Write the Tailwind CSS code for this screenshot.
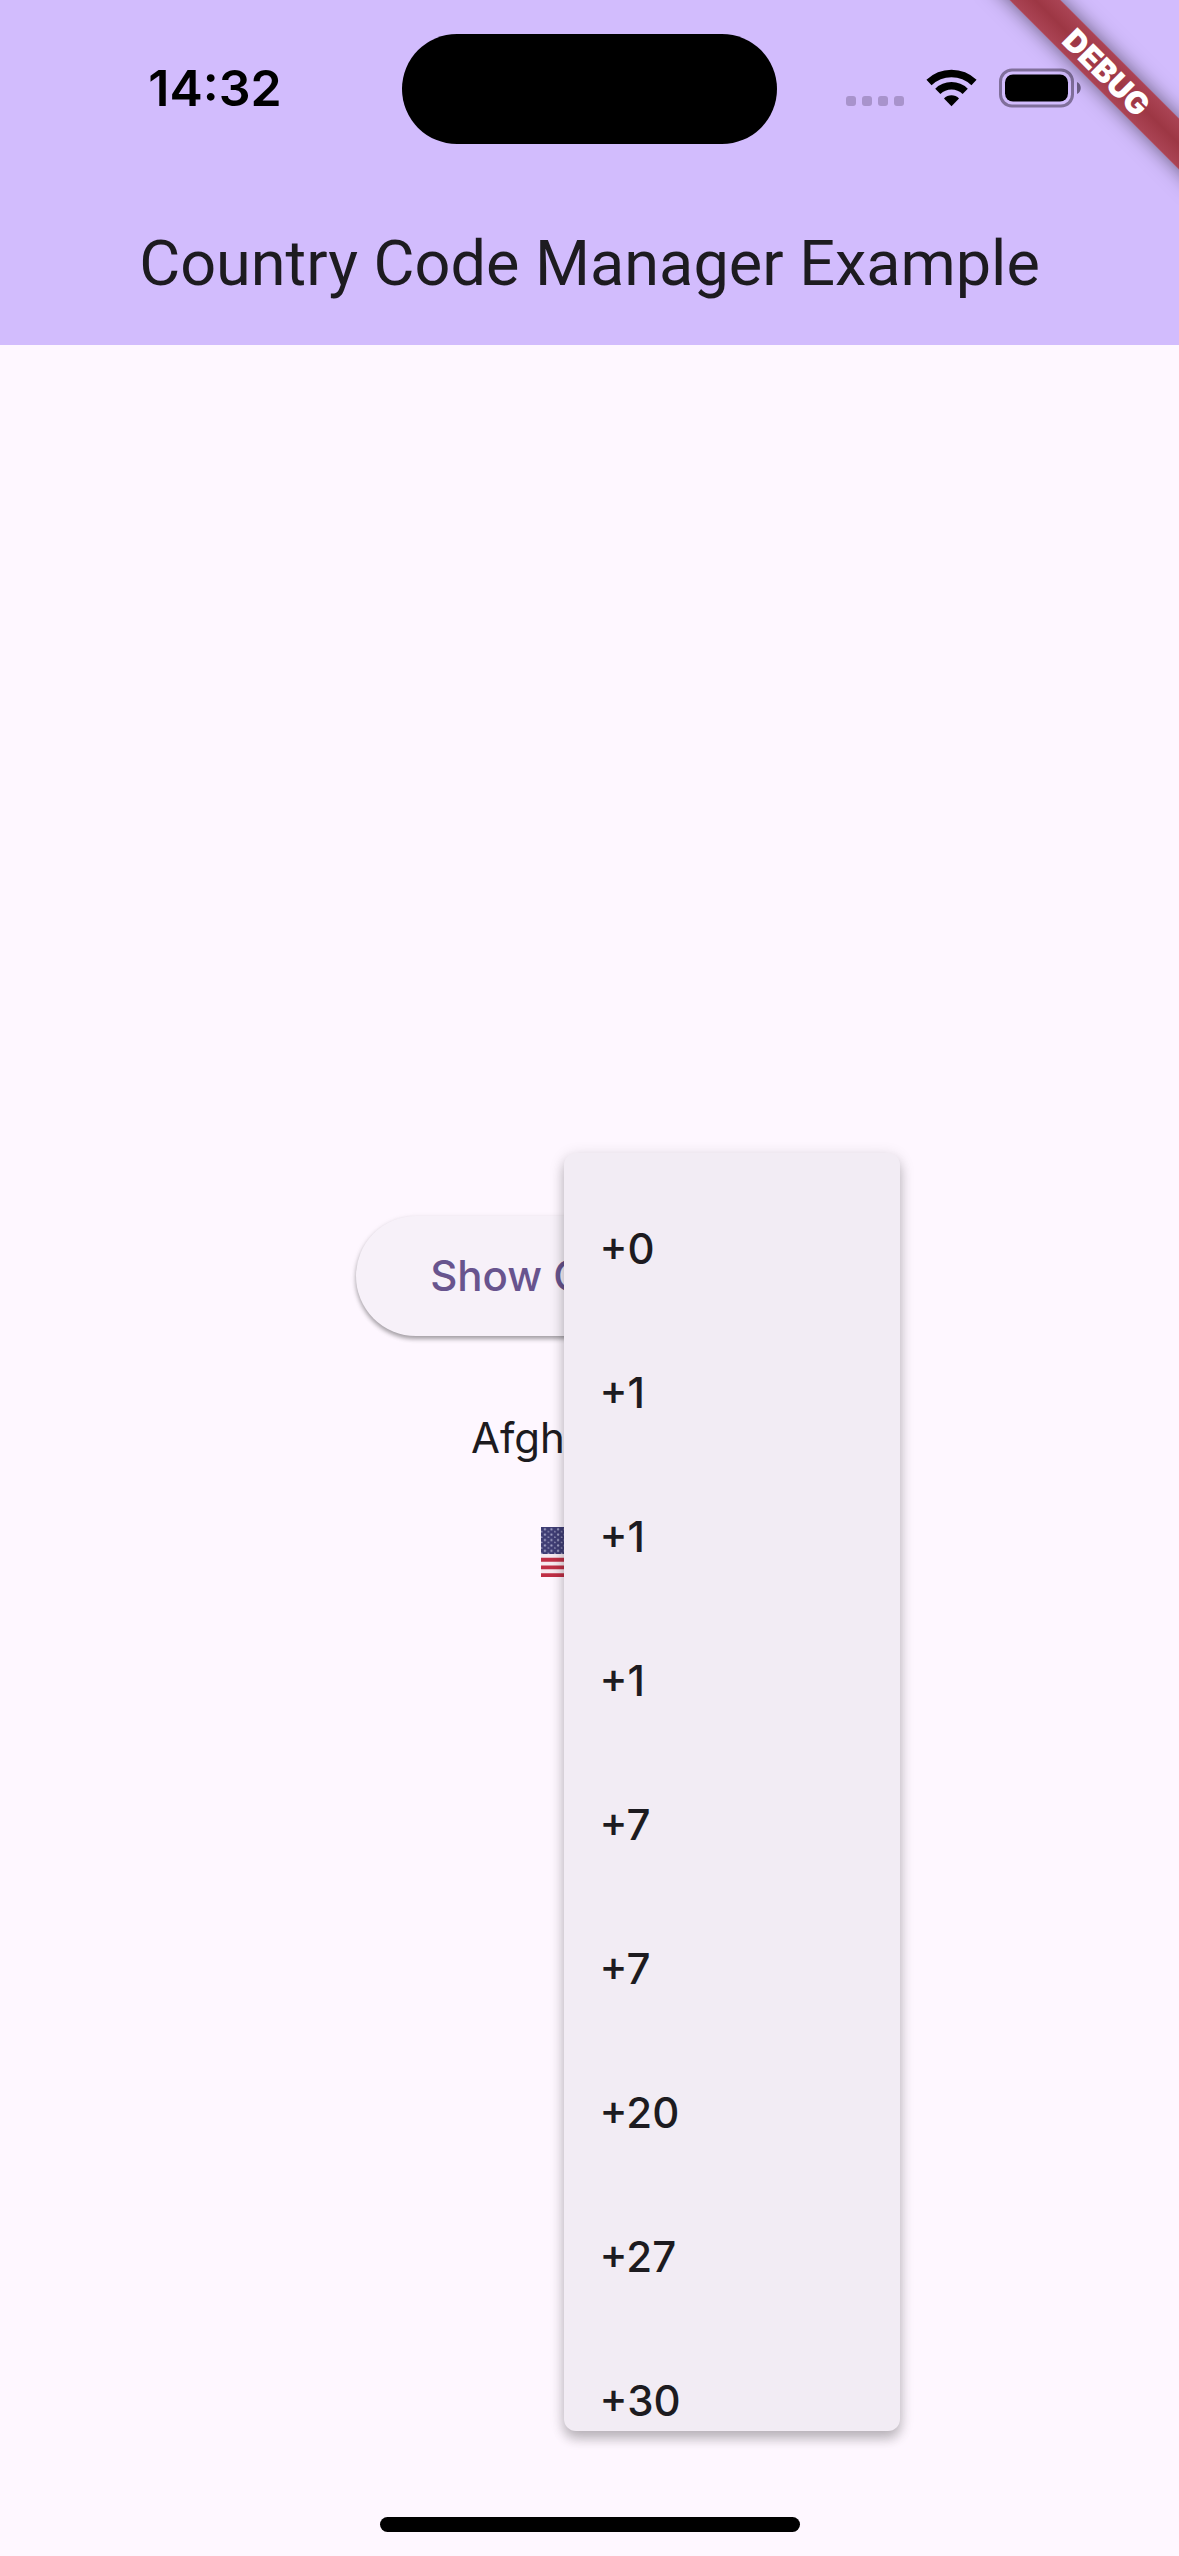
<!DOCTYPE html>
<html lang="en">
<head>
<meta charset="utf-8">
<meta name="viewport" content="width=device-width, initial-scale=1">
<title>Country Code Manager Example</title>
<script src="https://cdn.jsdelivr.net/npm/@tailwindcss/browser@4"></script>
</head>
<body class="relative flex min-h-screen flex-col overflow-x-hidden bg-[#fef7ff] font-['Inter',sans-serif] text-[#1d1b20]">
  <header class="bg-[#d2bcfd]">
    <!-- Status bar -->
    <div class="grid h-[177px] grid-cols-[1fr_375px_1fr] items-center px-7 text-black">
      <time class="pb-0.5 text-center text-[50px] leading-none font-semibold">14:32</time>
      <div class="h-[110px] rounded-full bg-black"></div>
      <div class="flex items-center justify-center pb-0.5">
        <svg class="h-10 w-[236px]" viewBox="0 0 236 40" aria-label="Wi-Fi on, battery full" role="img">
          <g fill="#a893cc">
            <rect x="0" y="28" width="10" height="10" rx="3"/>
            <rect x="16" y="28" width="10" height="10" rx="3"/>
            <rect x="32" y="28" width="10" height="10" rx="3"/>
            <rect x="48" y="28" width="10" height="10" rx="3"/>
          </g>
          <g fill="none" stroke="#000" stroke-width="7.4">
            <path d="M83 14.5a32.500 32.500 0 0 1 45 0"/>
            <path d="M91.800 23.300a19.600 19.600 0 0 1 27.400 0"/>
          </g>
          <path d="M105.500 38.200l-7.500-7.700c3.800-4.300 11.200-4.300 15 0z"/>
          <rect x="154.500" y="2" width="72" height="36" rx="11.500" fill="none" stroke="#806f9b" stroke-width="3"/>
          <rect x="159" y="6.500" width="63" height="27" rx="8"/>
          <path d="M231 14c5 2 5 10 0 12z" fill="#6f6088"/>
        </svg>
      </div>
    </div>
    <div class="flex h-[168px] items-center justify-center pt-1">
      <h1 class="font-['Roboto',sans-serif] text-[63px] leading-none whitespace-nowrap">Country Code Manager Example</h1>
    </div>
  </header>

  <main class="flex flex-1 flex-col justify-center pb-[34px]">
    <div class="relative flex flex-col items-center pt-3">
      <button type="button" class="h-[120px] rounded-full bg-[#f7f1f9] px-[74px] text-[42px] leading-none font-medium whitespace-nowrap text-[#68548e] shadow-[0_3px_4px_rgba(0,0,0,0.3),0_2px_6px_rgba(0,0,0,0.1)]">Show Countries</button>
      <p class="mt-[72px] text-[42px] leading-[60px]">Afghanistan</p>
      <button type="button" class="mt-3 flex h-36 items-center" aria-label="Select country code" aria-haspopup="menu" aria-expanded="true">
        <svg class="h-[50px] w-[97px]" viewBox="0 0 97 50" aria-hidden="true">
          <defs>
            <pattern id="stars" width="6.600" height="5.400" patternUnits="userSpaceOnUse">
              <circle cx="3.900" cy="2.300" r="1.100" fill="#a3a3c5"/>
              <circle cx="0.600" cy="5" r="1" fill="#a3a3c5"/>
            </pattern>
          </defs>
          <rect width="97" height="50" fill="#f6eaf0"/>
          <path d="M0 1.900h97M0 9.600h97M0 17.300h97M0 25h97M0 32.700h97M0 40.400h97M0 48.100h97" stroke="#bf2f45" stroke-width="3.850"/>
          <rect width="39" height="27" fill="#3f3d74"/>
          <rect width="39" height="27" fill="url(#stars)"/>
        </svg>
      </button>

      <!-- Open dial code menu -->
      <div role="menu" aria-label="Country codes" class="absolute -top-[51px] left-[calc(50%-26px)] h-[1278px] w-[336px] overflow-hidden rounded-xl bg-[#f2ecf4] py-6 text-[42px] leading-none font-medium shadow-[0_8px_12px_rgba(0,0,0,0.2),0_3px_16px_rgba(0,0,0,0.14)]">
        <button type="button" role="menuitem" class="block h-36 w-full px-9 text-left">+0</button>
        <button type="button" role="menuitem" class="block h-36 w-full px-9 text-left">+1</button>
        <button type="button" role="menuitem" class="block h-36 w-full px-9 text-left">+1</button>
        <button type="button" role="menuitem" class="block h-36 w-full px-9 text-left">+1</button>
        <button type="button" role="menuitem" class="block h-36 w-full px-9 text-left">+7</button>
        <button type="button" role="menuitem" class="block h-36 w-full px-9 text-left">+7</button>
        <button type="button" role="menuitem" class="block h-36 w-full px-9 text-left">+20</button>
        <button type="button" role="menuitem" class="block h-36 w-full px-9 text-left">+27</button>
        <button type="button" role="menuitem" class="block h-36 w-full px-9 text-left">+30</button>
      </div>
    </div>
  </main>

  <!-- Home indicator -->
  <footer class="flex justify-center pb-6">
    <div class="h-[15px] w-[420px] rounded-full bg-black"></div>
  </footer>

  <!-- Debug ribbon across the top right corner -->
  <div class="pointer-events-none absolute top-0 right-0 size-60 overflow-hidden">
    <div class="absolute top-[54px] -right-[78px] flex h-9 w-[300px] rotate-45 items-center justify-center bg-linear-to-b from-[#ab4455] via-[#9d3744] to-[#ab4455] text-[31px] leading-none font-black text-white shadow-[0_0_20px_rgba(0,0,0,0.5)]">DEBUG</div>
  </div>
</body>
</html>
